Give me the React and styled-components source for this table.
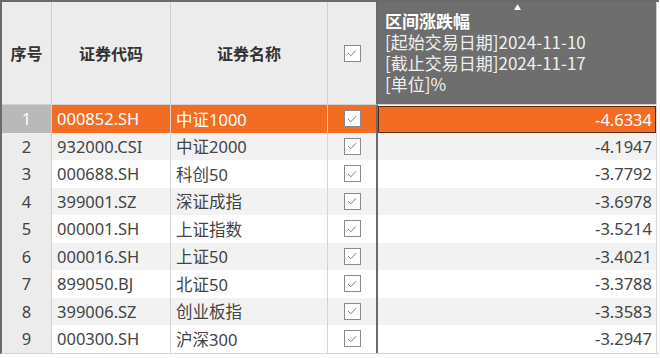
import React from 'react';
import styled, { createGlobalStyle } from 'styled-components';

const GlobalStyle = createGlobalStyle`
  html, body {
    margin: 0;
    padding: 0;
    background: #ffffff;
  }
  body {
    font-family: "Noto Sans", "Noto Sans CJK SC", sans-serif;
  }
`;

const ROWS = [
  ['000852.SH', '中证1000', '-4.6334'],
  ['932000.CSI', '中证2000', '-4.1947'],
  ['000688.SH', '科创50', '-3.7792'],
  ['399001.SZ', '深证成指', '-3.6978'],
  ['000001.SH', '上证指数', '-3.5214'],
  ['000016.SH', '上证50', '-3.4021'],
  ['899050.BJ', '北证50', '-3.3788'],
  ['399006.SZ', '创业板指', '-3.3583'],
  ['000300.SH', '沪深300', '-3.2947'],
];

const Sheet = styled.div`
  width: 657px;
  border-top: 2px solid #6a6a6a;
  border-left: 2px solid #6a6a6a;
  border-bottom: 1px solid #d4d4d4;
  display: grid;
  grid-template-columns: 50px 119px 157px 50px 279px;
  grid-template-rows: 103px;
  grid-auto-rows: 27.5px;
  color: #444444;
  font-size: 16.5px;
`;

const HeadCell = styled.div`
  background: #ececec;
  border-right: ${(p) => (p.$thick ? '2px solid #6a6a6a' : '1px solid #cfcfcf')};
  border-bottom: 1px solid #d2d2d2;
  display: flex;
  align-items: center;
  justify-content: center;
  font-family: "Noto Sans CJK SC", sans-serif;
  font-weight: 700;
  color: #333333;
  font-size: 16px;
`;

const RangeHead = styled.div`
  position: relative;
  background: #6e6e6e;
  border-right: 1px solid #cfcfcf;
  border-bottom: 1px solid #d2d2d2;
  color: #ffffff;
  padding: 8px 0 0 7px;
  font-family: "Noto Sans CJK SC", sans-serif;
  font-size: 17px;
`;

const HeadTitle = styled.div`
  font-weight: 700;
  height: 21px;
  line-height: 21px;
`;

const HeadLine = styled.div`
  font-weight: 400;
  color: #f0f0f0;
  height: 21px;
  line-height: 21px;
`;

const SortMark = styled.span`
  position: absolute;
  top: 1px;
  left: 136px;
  font-size: 7px;
  line-height: 8px;
  color: #ffffff;
`;

const IndexCell = styled.div`
  background: ${(p) => (p.$active ? '#b9b9b9' : '#ececec')};
  color: ${(p) => (p.$active ? '#ffffff' : '#444444')};
  border-right: 1px solid #cfcfcf;
  display: flex;
  align-items: center;
  justify-content: center;
`;

const Cell = styled.div`
  background: ${(p) => (p.$active ? '#f36c23' : p.$alt ? '#f2f2f2' : '#ffffff')};
  color: ${(p) => (p.$active ? '#ffffff' : '#444444')};
  border-right: ${(p) => (p.$thick ? '2px solid #6a6a6a' : '1px solid #d4d4d4')};
  display: flex;
  align-items: center;
  justify-content: ${(p) => (p.$center ? 'center' : p.$right ? 'flex-end' : 'flex-start')};
  padding: ${(p) => (p.$right ? '0 4px 0 0' : p.$center ? '0' : '0 0 0 5px')};
  font-family: "Noto Sans", "Noto Sans CJK SC", sans-serif;
  white-space: nowrap;
  overflow: hidden;
`;

const ValueCell = styled(Cell)`
  box-shadow: ${(p) => (p.$active ? 'inset 0 0 0 1px #5b2a0c' : 'none')};
  margin-top: ${(p) => (p.$active ? '1px' : '0')};
`;

const Box = styled.span`
  width: 17px;
  height: 17px;
  box-sizing: border-box;
  border: 1px solid #8a8a8a;
  background: #ffffff;
  display: flex;
  align-items: center;
  justify-content: center;
`;

const Check = () => (
  <Box>
    <svg width="10" height="8" viewBox="0 0 10 8">
      <path d="M1 4 L3.8 6.8 L9 1.2" fill="none" stroke="#7a7a7a" strokeWidth="1" />
    </svg>
  </Box>
);

export default function App() {
  return (
    <>
      <GlobalStyle />
      <Sheet>
        <HeadCell>序号</HeadCell>
        <HeadCell>证券代码</HeadCell>
        <HeadCell>证券名称</HeadCell>
        <HeadCell $thick>
          <Check />
        </HeadCell>
        <RangeHead>
          <SortMark>▲</SortMark>
          <HeadTitle>区间涨跌幅</HeadTitle>
          <HeadLine>[起始交易日期]2024-11-10</HeadLine>
          <HeadLine>[截止交易日期]2024-11-17</HeadLine>
          <HeadLine>[单位]%</HeadLine>
        </RangeHead>
        {ROWS.map(([code, name, value], i) => {
          const active = i === 0;
          const alt = i % 2 === 1;
          return (
            <React.Fragment key={code}>
              <IndexCell $active={active}>{i + 1}</IndexCell>
              <Cell $active={active} $alt={alt}>{code}</Cell>
              <Cell $active={active} $alt={alt}>{name}</Cell>
              <Cell $active={active} $alt={alt} $center $thick>
                <Check />
              </Cell>
              <ValueCell $active={active} $alt={alt} $right>{value}</ValueCell>
            </React.Fragment>
          );
        })}
      </Sheet>
    </>
  );
}
